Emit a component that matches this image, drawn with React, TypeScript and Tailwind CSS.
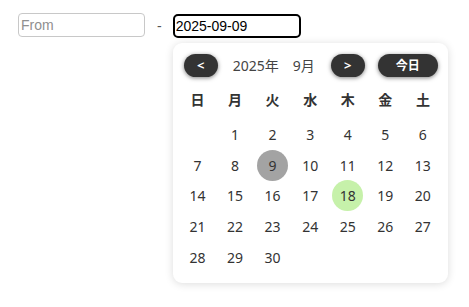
import { useState } from 'react';

const WEEKDAYS = ['日', '月', '火', '水', '木', '金', '土'];

// September 2025 starts on a Monday
const LEADING = 1;
const DAYS_IN_MONTH = 30;

export default function App() {
  const [selected] = useState(9);
  const today = 18;

  const cells: (number | null)[] = [
    ...Array.from({ length: LEADING }, () => null),
    ...Array.from({ length: DAYS_IN_MONTH }, (_, i) => i + 1),
  ];

  return (
    <div className="min-h-screen bg-white pl-[18px] pt-[13px] font-['Noto_Sans','Noto_Sans_CJK_JP',sans-serif] text-[#333]">
      <div className="flex items-start">
        <input
          placeholder="From"
          className="h-[24px] w-[127px] rounded-[4px] border border-[#c8c8c8] px-[2px] font-['Liberation_Sans',sans-serif] text-[14px] text-black outline-none placeholder:text-[#8f8f8f]"
        />
        <span className="ml-[12px] mr-[11px] mt-[3px] font-['Liberation_Sans',sans-serif] text-[14px] text-[#555]">-</span>
        <div className="relative">
          <input
            defaultValue="2025-09-09"
            className="h-[24px] w-[128px] rounded-[5px] border-2 border-black px-[1px] font-['Liberation_Sans',sans-serif] text-[14px] text-black outline-none"
          />
          <div className="absolute left-0 top-[30px] w-[275px] rounded-[9px] bg-white px-[6px] pb-[10px] pt-[11px] shadow-[0_1px_8px_rgba(0,0,0,0.14)]">
            <div className="flex h-[23px] items-center pl-[5px] pr-[4px]">
              <button className="flex h-[23px] w-[34px] items-center justify-center rounded-full bg-[#333] text-[13px] font-bold text-white shadow-[0_1px_4px_rgba(0,0,0,0.5)]">
                &lt;
              </button>
              <span className="ml-[15px] text-[14px] text-[#444]">2025年</span>
              <span className="ml-[14px] text-[14px] text-[#444]">9月</span>
              <button className="ml-[16px] flex h-[23px] w-[34px] items-center justify-center rounded-full bg-[#333] text-[13px] font-bold text-white shadow-[0_1px_4px_rgba(0,0,0,0.5)]">
                &gt;
              </button>
              <button className="ml-auto flex h-[23px] w-[60px] items-center justify-center rounded-full bg-[#333] text-[12px] font-bold text-white shadow-[0_1px_4px_rgba(0,0,0,0.5)]">
                今日
              </button>
            </div>
            <div className="mt-[7px] grid grid-cols-7">
              {WEEKDAYS.map((d) => (
                <div key={d} className="flex h-[31px] items-center justify-center text-[14px] font-bold text-[#333]">
                  {d}
                </div>
              ))}
            </div>
            <div className="mt-[4px] grid grid-cols-7">
              {cells.map((day, i) => (
                <div key={i} className="flex h-[30.75px] items-center justify-center">
                  {day !== null && (
                    <span
                      className={
                        'flex h-[31px] w-[31px] items-center justify-center rounded-full text-[14px] text-[#333] ' +
                        (day === selected ? 'bg-[#a3a3a3]' : day === today ? 'bg-[#c6f1aa]' : '')
                      }
                    >
                      {day}
                    </span>
                  )}
                </div>
              ))}
            </div>
          </div>
        </div>
      </div>
    </div>
  );
}
